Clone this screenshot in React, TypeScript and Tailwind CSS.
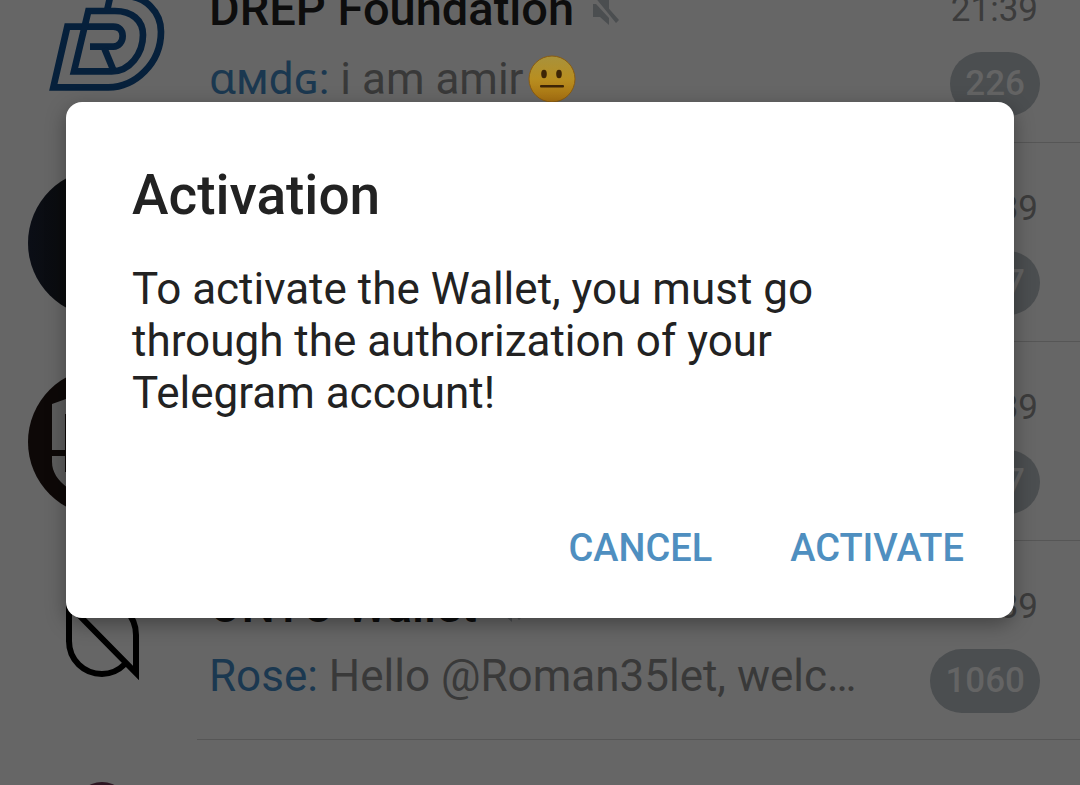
import React from "react";

type Chat = {
  id: number;
  title?: string;
  sender?: string;
  message?: React.ReactNode;
  time?: string;
  unread?: string;
  avatar: React.ReactNode;
};

const NeutralFace = () => (
  <svg
    viewBox="0 0 48 48"
    role="img"
    aria-label="neutral face"
    className="ml-1 inline size-12 align-[-9px]"
  >
    <defs>
      <linearGradient id="face" x1="0" y1="0" x2="0" y2="1">
        <stop offset="0" stopColor="#a8923c" />
        <stop offset="0.5" stopColor="#b88e20" />
        <stop offset="1" stopColor="#a87010" />
      </linearGradient>
    </defs>
    <circle
      cx="24"
      cy="24"
      r="23"
      fill="url(#face)"
      stroke="#8a5c10"
      strokeWidth="1"
    />
    <ellipse cx="16" cy="19" rx="2.8" ry="4.2" fill="#3d2506" />
    <ellipse cx="31" cy="19" rx="2.8" ry="4.2" fill="#3d2506" />
    <rect x="12" y="30" width="24" height="2.6" rx="1" fill="#3d2506" />
  </svg>
);

const MuteIcon = () => (
  <svg
    viewBox="0 0 28 34"
    aria-hidden="true"
    className="h-[34px] w-7 flex-none"
    fill="#4b4e50"
  >
    <path d="M1 12H4L17 26V33L8 25H1ZM8 8L17 0V18ZM2 4L4 2L27 28L24 31Z" />
  </svg>
);

const DrepLogo = () => (
  <svg viewBox="0 0 148 148" className="size-full" fill="none">
    <g
      stroke="#06203b"
      strokeWidth="20"
      transform="translate(17 30) scale(0.3333)"
    >
      <path d="M135 140H205C222 140 233 125 233 108C233 90 222 80 205 80H67L25 262H190C270 262 348 190 348 95C348 35 300 -12 240 -12H196L186 33" />
      <path d="M210 33H130L87 214H200C255 214 294 160 294 105C294 60 260 33 210 33Z" />
      <path d="M178 145L205 210" />
    </g>
  </svg>
);

const ShieldLogo = () => (
  <svg viewBox="0 0 148 148" className="size-full">
    <path
      d="M24 36L74 18L124 36V94C124 114 100 124 74 136C48 128 24 114 24 94Z"
      fill="#5d5d5d"
    />
    <path d="M24 85H124M40 46V104" stroke="#0d0807" strokeWidth="6" />
  </svg>
);

const OntoLogo = () => (
  <svg viewBox="0 0 148 148" className="size-full" fill="none">
    <path
      d="M41 75V38L108 106V68C108 48 92 34 74 34M41 74C41 93 56 107 74 107C84 107 91 103 97 97"
      stroke="#000"
      strokeWidth="6"
    />
  </svg>
);

const chats: Chat[] = [
  {
    id: 1,
    title: "DREP Foundation",
    sender: "ɑмdɢ:",
    message: (
      <>
        i am amir
        <NeutralFace />
      </>
    ),
    time: "21:39",
    unread: "226",
    avatar: <DrepLogo />,
  },
  {
    id: 2,
    time: "21:39",
    unread: "17",
    avatar: (
      <div className="size-full bg-linear-to-r from-[#0b0e16] to-[#0a0b0c] to-30%" />
    ),
  },
  {
    id: 3,
    time: "21:39",
    unread: "17",
    avatar: (
      <div className="size-full bg-[#0d0807]">
        <ShieldLogo />
      </div>
    ),
  },
  {
    id: 4,
    title: "ONTO Wallet",
    sender: "Rose:",
    message: "Hello @Roman35let, welc…",
    time: "21:39",
    unread: "1060",
    avatar: <OntoLogo />,
  },
  {
    id: 5,
    avatar: (
      <svg viewBox="0 0 148 148" className="size-full">
        <circle cx="74" cy="43" r="27" fill="#2d1622" />
      </svg>
    ),
  },
];

function ChatRow({ chat }: { chat: Chat }) {
  return (
    <li className="flex h-[199px] pl-7">
      <div className="mt-[26px] size-[148px] flex-none overflow-hidden rounded-full">
        {chat.avatar}
      </div>
      <div className="ml-[21px] flex min-w-0 flex-1 border-b border-[#565656] pr-10 pl-3">
        <div className="min-w-0 flex-1 pt-[33px]">
          <div className="flex h-16 items-center gap-[18px]">
            <h2 className="text-[47px] font-medium whitespace-nowrap text-[#0d0d0d]">
              {chat.title}
            </h2>
            {chat.title && <MuteIcon />}
          </div>
          <p className="truncate text-[44px] leading-[76px] text-[#393939]">
            <span className="text-[#1b3850]">{chat.sender}</span>{" "}
            {chat.message}
          </p>
        </div>
        <div className="flex flex-none flex-col items-end">
          <time className="mt-[45px] pr-[2px] text-[35px] leading-[42px] text-[#3c3c3c]">
            {chat.time}
          </time>
          {chat.unread && (
            <span className="mt-[21px] flex h-16 items-center rounded-full bg-[#4b4e50] px-[15px] text-[35px] font-medium text-[#646464]">
              {chat.unread}
            </span>
          )}
        </div>
      </div>
    </li>
  );
}

export default function App() {
  return (
    <div className="relative h-screen overflow-hidden bg-[#666] font-[Roboto,'Noto_Sans',sans-serif]">
      <ul className="-mt-14">
        {chats.map((chat) => (
          <ChatRow key={chat.id} chat={chat} />
        ))}
      </ul>

      <div className="absolute inset-x-0 top-[102px] px-[66px]">
        <div
          role="dialog"
          aria-labelledby="dialog-title"
          className="rounded-2xl bg-white px-[66px] pt-[60px] pb-[27px] text-[#222] shadow-[0_6px_20px_rgba(0,0,0,0.35)]"
        >
          <h1
            id="dialog-title"
            className="text-[55px] leading-[66px] font-medium"
          >
            Activation
          </h1>
          <p className="mt-[35px] max-w-[720px] text-[44px] leading-[52px]">
            To activate the Wallet, you must go through the authorization of
            your Telegram account!
          </p>
          <div className="mt-[86px] -mr-12 flex justify-end gap-[14px] text-[38px] font-medium text-[#4f8fc0]">
            <button className="h-[86px] px-8">CANCEL</button>
            <button className="h-[86px] px-8">ACTIVATE</button>
          </div>
        </div>
      </div>
    </div>
  );
}
